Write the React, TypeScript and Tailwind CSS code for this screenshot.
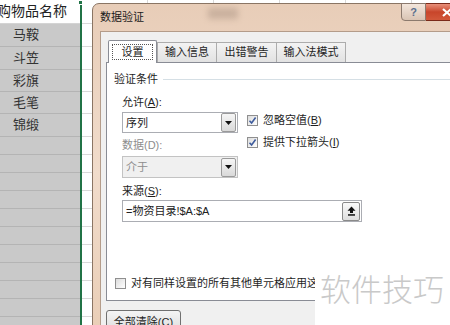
import React from 'react';

const items = [
  { name: '马鞍', h: 'h-[23px]' },
  { name: '斗笠', h: 'h-[23px]' },
  { name: '彩旗', h: 'h-[22px]' },
  { name: '毛笔', h: 'h-[22px]' },
  { name: '锦缎', h: 'h-[23px]' },
];
const emptyRows = Array.from({ length: 11 });

const Check = ({ checked }: { checked?: boolean }) => (
  <span className="w-[11px] h-[11px] border border-[#8f8f8f] bg-gradient-to-br from-[#dcdcdc] to-white flex items-center justify-center shrink-0">
    {checked && (
      <svg width="9" height="9" viewBox="0 0 9 9">
        <path d="M1.5 4.8 L3.6 7 L7.6 1.6" fill="none" stroke="#3d5b9c" strokeWidth="1.6" />
      </svg>
    )}
  </span>
);

const DropBtn = () => (
  <span className="w-[15px] h-[19px] mr-px border border-[#9a9a9a] rounded-[2px] bg-gradient-to-b from-[#f6f6f6] to-[#d9d9d9] flex items-center justify-center">
    <svg width="7" height="4" viewBox="0 0 7 4">
      <path d="M0 0 H7 L3.5 4 Z" fill="#111" />
    </svg>
  </span>
);

export default function App() {
  return (
    <div className="relative w-[450px] h-[325px] overflow-hidden bg-white font-['Liberation_Sans','Noto_Sans_CJK_SC',sans-serif] text-[#1e1e1e]">
      {/* spreadsheet behind the dialog */}
      <div className="flex h-full">
        <div className="w-[80px] flex flex-col">
          <div className="h-[24px] shrink-0 bg-white border-b border-[#d4d4d4] text-[14px] leading-[23px] whitespace-nowrap -ml-[3px] text-[#222]">
            购物品名称
          </div>
          {items.map((it) => (
            <div key={it.name} className={`${it.h} shrink-0 bg-[#c9c9c9] border-b border-[#b4b4b4] text-[13px] leading-[22px] pl-[13px] text-[#333]`}>
              {it.name}
            </div>
          ))}
          {emptyRows.map((_, i) => (
            <div key={i} className="h-[18px] shrink-0 bg-[#c9c9c9] border-b border-[#b4b4b4]" />
          ))}
        </div>
        <div className="relative w-[2px] bg-[#217346]">
          <div className="absolute -left-[2px] top-0 w-[5px] h-[5px] bg-[#217346] border border-white" />
        </div>
        {[0, 1, 2, 3, 4].map((c) => (
          <div key={c} className="w-[66px] flex flex-col border-r border-[#d9d9d9]">
            <div className="h-[24px] shrink-0 border-b border-[#d9d9d9]" />
            {items.map((it) => (
              <div key={it.name} className={`${it.h} shrink-0 border-b border-[#d9d9d9]`} />
            ))}
            {emptyRows.map((_, i) => (
              <div key={i} className="h-[18px] shrink-0 border-b border-[#d9d9d9]" />
            ))}
          </div>
        ))}
      </div>

      {/* dialog window */}
      <div className="absolute left-[92px] top-[3px] w-[384px] h-[340px] rounded-t-[7px] border border-[#8a7564] bg-gradient-to-b from-[#e8cdb8] via-[#f1dccb] to-[#e9cdb5] flex flex-col">
        <div className="relative h-[27px] shrink-0 flex items-start pr-[6px]">
          <span className="pl-[7px] pt-[6px] text-[11px] leading-[14px] text-[#1a1a1a]">数据验证</span>
          <div className="absolute left-[115px] top-[4px] w-[30px] h-[11px] bg-[#9c8676] opacity-40 blur-[3px]" />
          <div className="ml-auto flex -mt-px">
            <div className="w-[25px] h-[18px] border border-[#8c7a6e] rounded-bl-[4px] bg-gradient-to-b from-[#f3e6dc] to-[#d9c4b4] flex items-center justify-center text-[11px] font-bold text-[#5a6f8e]">
              ?
            </div>
            <div className="w-[43px] h-[18px] border border-l-0 border-[#7a2a1a] rounded-br-[4px] bg-gradient-to-b from-[#e8907a] via-[#c8452a] to-[#d2583a] flex items-center justify-center">
              <svg width="10" height="9" viewBox="0 0 10 9">
                <path d="M1 1 L9 8 M9 1 L1 8" stroke="#fff" strokeWidth="2.2" />
              </svg>
            </div>
          </div>
        </div>

        <div className="flex-1 ml-[7px] border border-[#b49c8a] bg-[#f0f0f0] pt-[8px] pl-[5px] flex flex-col">
          {/* tabs */}
          <div className="flex items-end h-[22px] ml-[2px] text-[11px]">
            <div className="relative z-10 w-[49px] h-[23px] -mb-px bg-white border border-b-0 border-[#898c95] rounded-t-[2px] p-[3px]">
              <div className="h-[16px] border border-dotted border-[#555] flex items-center justify-center leading-[14px]">设置</div>
            </div>
            <div className="w-[60px] h-[20px] border border-b-0 border-[#acacac] bg-gradient-to-b from-[#f3f3f3] to-[#e2e2e2] flex items-center justify-center">输入信息</div>
            <div className="w-[61px] h-[20px] -ml-px border border-b-0 border-[#acacac] bg-gradient-to-b from-[#f3f3f3] to-[#e2e2e2] flex items-center justify-center">出错警告</div>
            <div className="w-[70px] h-[20px] -ml-px border border-b-0 border-[#acacac] bg-gradient-to-b from-[#f3f3f3] to-[#e2e2e2] flex items-center justify-center">输入法模式</div>
          </div>

          {/* settings panel */}
          <div className="h-[239px] shrink-0 bg-white border border-[#898c95] pt-[8px] pl-[7px] flex flex-col text-[11px] leading-[16px]">
            <div className="flex items-center">
              <span>验证条件</span>
              <div className="flex-1 ml-[5px] border-t border-[#d5dfe5]" />
            </div>

            <div className="ml-[8px] mt-[7px] flex">
              <div className="w-[116px] flex flex-col">
                <span>
                  允许(<span className="underline">A</span>):
                </span>
                <div className="mt-[2px] h-[21px] border border-[#abadb3] bg-white flex items-center">
                  <span className="flex-1 pl-[3px]">序列</span>
                  <DropBtn />
                </div>
                <span className="mt-[4px] text-[#8d8d8d]">数据(D):</span>
                <div className="mt-[3px] h-[22px] border border-[#c3c3c3] bg-[#f0f0f0] flex items-center">
                  <span className="flex-1 pl-[3px] text-[#8d8d8d]">介于</span>
                  <DropBtn />
                </div>
                <span className="mt-[5px]">
                  来源(<span className="underline">S</span>):
                </span>
              </div>
              <div className="ml-[9px] pt-[18px] flex flex-col gap-[6px]">
                <div className="flex items-center gap-[5px]">
                  <Check checked />
                  <span>
                    忽略空值(<span className="underline">B</span>)
                  </span>
                </div>
                <div className="flex items-center gap-[5px]">
                  <Check checked />
                  <span>
                    提供下拉箭头(<span className="underline">I</span>)
                  </span>
                </div>
              </div>
            </div>

            <div className="ml-[8px] mt-px w-[240px] h-[22px] border border-[#abadb3] bg-white flex items-center">
              <span className="flex-1 pl-[3px] text-[#222]">=物资目录!$A:$A</span>
              <span className="w-[18px] h-[19px] mr-px border border-[#8a8a8a] rounded-[2px] bg-gradient-to-b from-[#fafafa] to-[#dedede] flex items-center justify-center">
                <svg width="9" height="10" viewBox="0 0 9 10">
                  <path d="M4.5 0.5 L8.5 4.8 H6 V7 H3 V4.8 H0.5 Z" fill="#111" />
                  <rect x="1" y="8.2" width="7" height="1.5" fill="#111" />
                </svg>
              </span>
            </div>

            <div className="mt-auto mb-[9px] ml-px flex items-center gap-[5px] whitespace-nowrap">
              <Check />
              <span className="w-[184px] overflow-hidden">对有同样设置的所有其他单元格应用这些更改(P)</span>
            </div>
          </div>

          <div className="mt-[9px] w-[75px] h-[24px] rounded-[3px] border border-[#707070] bg-gradient-to-b from-[#f4f4f4] to-[#dcdcdc] flex items-center justify-center text-[11px]">
            全部清除(C)
          </div>
        </div>
      </div>

      {/* watermark */}
      <div className="absolute left-[315px] top-[264px] w-[135px] h-[61px] bg-white pl-[5px] pt-[6px] text-[31px] leading-[36px] text-[#c9c9c9] font-['Noto_Sans_CJK_SC',sans-serif] font-light">
        软件技巧
      </div>
    </div>
  );
}
